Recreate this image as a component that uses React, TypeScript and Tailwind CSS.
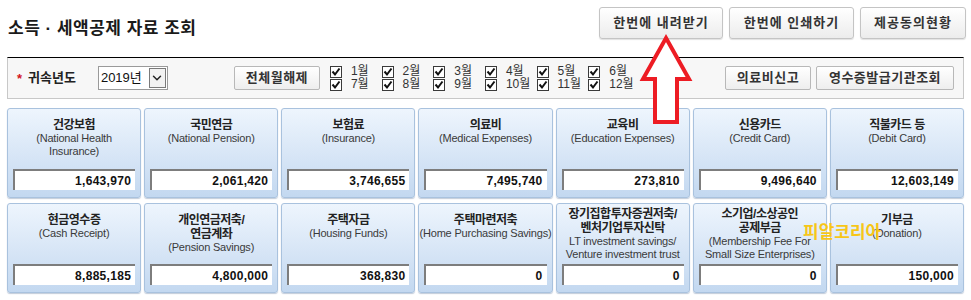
import { ChevronDown } from "lucide-react";

type Deduction = {
  title: string[];
  sub: string[];
  value: string;
  tight?: boolean;
};

const FONT = { fontFamily: '"Liberation Sans", "Noto Sans CJK KR", sans-serif' };

const rowOne: Deduction[] = [
  { title: ["건강보험"], sub: ["(National Health", "Insurance)"], value: "1,643,970" },
  { title: ["국민연금"], sub: ["(National Pension)"], value: "2,061,420" },
  { title: ["보험료"], sub: ["(Insurance)"], value: "3,746,655" },
  { title: ["의료비"], sub: ["(Medical Expenses)"], value: "7,495,740" },
  { title: ["교육비"], sub: ["(Education Expenses)"], value: "273,810" },
  { title: ["신용카드"], sub: ["(Credit Card)"], value: "9,496,640" },
  { title: ["직불카드 등"], sub: ["(Debit Card)"], value: "12,603,149" },
];

const rowTwo: Deduction[] = [
  { title: ["현금영수증"], sub: ["(Cash Receipt)"], value: "8,885,185" },
  { title: ["개인연금저축/", "연금계좌"], sub: ["(Pension Savings)"], value: "4,800,000" },
  { title: ["주택자금"], sub: ["(Housing Funds)"], value: "368,830" },
  { title: ["주택마련저축"], sub: ["(Home Purchasing Savings)"], value: "0" },
  {
    title: ["장기집합투자증권저축/", "벤처기업투자신탁"],
    sub: ["LT investment savings/", "Venture investment trust"],
    value: "0",
    tight: true,
  },
  {
    title: ["소기업/소상공인", "공제부금"],
    sub: ["(Membership Fee For", "Small Size Enterprises)"],
    value: "0",
    tight: true,
  },
  { title: ["기부금"], sub: ["(Donation)"], value: "150,000" },
];

const months = ["1월", "2월", "3월", "4월", "5월", "6월", "7월", "8월", "9월", "10월", "11월", "12월"];

export default function App() {
  return (
    <div className="relative h-[300px] w-[971px] overflow-hidden bg-white text-[#222]" style={FONT}>
      {/* header */}
      <div className="flex h-[57px] items-start justify-between pl-[8px] pr-[5px]">
        <h1 className="mt-[16px] text-[17px] font-bold tracking-[0.5px] text-[#1a1a1a]">
          소득 · 세액공제 자료 조회
        </h1>
        <div className="mt-[7px] flex gap-[6px]">
          <TopButton label="한번에 내려받기" width="w-[124px]" />
          <TopButton label="한번에 인쇄하기" width="w-[125px]" />
          <TopButton label="제공동의현황" width="w-[106px]" />
        </div>
      </div>

      {/* search bar */}
      <div className="mx-[7px] flex h-[42px] items-center border border-t-black border-r-[#c8c8c8] border-b-[#c8c8c8] border-l-[#c8c8c8] bg-[#f7f7f7]">
        <span className="ml-[9px] text-[13px] font-bold leading-none text-[#d4141c]">*</span>
        <span className="ml-[6px] text-[13px] font-bold text-[#222]">귀속년도</span>
        <div className="ml-[22px] flex h-[24px] w-[70px] items-center border border-[#9a9a9a] bg-white">
          <span className="flex-1 pl-[2px] text-[13px] text-[#111]">2019년</span>
          <div className="mr-[1px] flex h-[20px] w-[17px] items-center justify-center border border-[#7a7a7a] bg-[#f2f2f2]">
            <ChevronDown className="h-[14px] w-[14px] text-[#222]" strokeWidth={2.5} />
          </div>
        </div>
        <BarButton label="전체월해제" className="ml-[66px] w-[86px]" />
        <div className="ml-[10px] grid w-[310px] grid-cols-6">
          {months.map((m) => (
            <label key={m} className="flex h-[13px] items-center gap-[9px] text-[12px] leading-[13px] text-[#333]">
              <CheckBox />
              <span>{m}</span>
            </label>
          ))}
        </div>
        <div className="ml-auto mr-[9px] flex gap-[5px]">
          <BarButton label="의료비신고" className="w-[86px]" />
          <BarButton label="영수증발급기관조회" className="w-[138px]" />
        </div>
      </div>

      {/* cards */}
      <div className="mt-[9px] grid grid-cols-7 gap-x-[3px] gap-y-[5px] px-[7px]">
        {[...rowOne, ...rowTwo].map((d) => (
          <Card key={d.title.join("")} item={d} />
        ))}
      </div>

      {/* overlay: red arrow */}
      <svg className="absolute left-[638px] top-[33px]" width="58" height="94" viewBox="0 0 58 94">
        <path
          d="M28 5 L51 46 L39 46 L39 89 L17 89 L17 46 L5 46 Z"
          fill="white"
          stroke="#ed1c24"
          strokeWidth="4"
          strokeLinejoin="miter"
        />
      </svg>

      {/* watermark */}
      <span className="absolute left-[803px] top-[220px] text-[17px] font-bold text-[#f7c617]">피알코리아</span>
    </div>
  );
}

function TopButton({ label, width }: { label: string; width: string }) {
  return (
    <button
      className={`${width} h-[32px] rounded-[3px] border border-[#c4c4c4] bg-gradient-to-b from-white to-[#ececec] text-[13px] font-bold tracking-[1px] text-[#333] shadow-[0_1px_1px_rgba(0,0,0,0.12)]`}
    >
      {label}
    </button>
  );
}

function BarButton({ label, className }: { label: string; className: string }) {
  return (
    <button
      className={`${className} h-[24px] rounded-[2px] border border-[#b8b8b8] bg-gradient-to-b from-white to-[#eeeeee] text-[13px] font-bold tracking-[0.5px] text-[#333]`}
    >
      {label}
    </button>
  );
}

function CheckBox() {
  return (
    <svg width="12" height="12" viewBox="0 0 12 12" className="shrink-0">
      <rect x="0.5" y="0.5" width="11" height="11" fill="white" stroke="#3a3a3a" />
      <path d="M2.5 5.5 L5 8.5 L9.5 2.5" fill="none" stroke="#111" strokeWidth="2" />
    </svg>
  );
}

function Card({ item }: { item: Deduction }) {
  return (
    <div className="flex h-[90px] flex-col rounded-[3px] border border-[#a9c2de] bg-gradient-to-b from-[#eef5fd] to-[#c3d8f0] shadow-[0_1px_1px_rgba(80,110,150,0.35)]">
      <div className={`flex flex-col items-center text-center ${item.tight ? "pt-[3px]" : "pt-[9px]"}`}>
        {item.title.map((t) => (
          <div key={t} className="whitespace-nowrap text-[12px] font-bold leading-[14px] tracking-[-0.5px] text-[#222]">
            {t}
          </div>
        ))}
        {item.sub.map((s) => (
          <div key={s} className="whitespace-nowrap text-[11px] leading-[12.5px] tracking-[-0.2px] text-[#3a3a3a]">
            {s}
          </div>
        ))}
      </div>
      <div className="mx-[5px] mb-[7px] mt-auto flex h-[21px] items-center justify-end border-t-2 border-l-2 border-t-[#7d7d7d] border-l-[#7d7d7d] bg-white pr-[4px] text-[12px] font-bold tracking-[0.3px] text-[#111]">
        {item.value}
      </div>
    </div>
  );
}
